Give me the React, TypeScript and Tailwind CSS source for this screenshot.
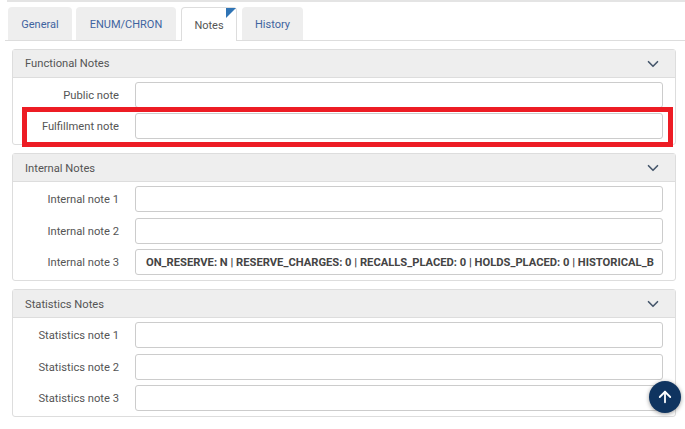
import React from 'react';
import { ChevronDown, ArrowUp } from 'lucide-react';

const tabs = [
  { name: 'General', width: 'w-[64px]' },
  { name: 'ENUM/CHRON', width: 'w-[100px]' },
  { name: 'Notes', width: 'w-[56px]' },
  { name: 'History', width: 'w-[61px]' },
];

const NoteRow = ({ label, value }: { label: string; value?: string }) => (
  <div className="flex items-center h-[26px]">
    <label className="w-[106px] pt-[3px] text-right text-[11.2px] text-[#555]">{label}</label>
    <div className="ml-[16px] w-[528px] h-[26px] bg-white border border-[#ccc] rounded-[3px] px-[10px] pt-[2px] flex items-center whitespace-nowrap text-[11.2px] font-bold text-[#444]">
      {value}
    </div>
  </div>
);

const Panel = ({ title, tight, children }: { title: string; tight?: boolean; children: React.ReactNode }) => (
  <section className="border border-[#ddd] rounded-[3px] bg-white">
    <header className="h-[28px] bg-[#eee] border-b border-[#ddd] flex items-center justify-between pl-[12px] pr-[13px]">
      <span className={tight ? 'pt-[2px] text-[11.2px] text-[#555]' : 'pt-[4px] text-[11.2px] text-[#555]'}>{title}</span>
      <ChevronDown className="w-[18px] h-[18px] text-[#45566b]" strokeWidth={2.2} />
    </header>
    <div className={tight ? 'pt-[4px] pb-[5px] flex flex-col gap-[5px]' : 'pt-[4px] pb-[5px] flex flex-col gap-[5.5px]'}>{children}</div>
  </section>
);

export default function App() {
  return (
    <div className="relative w-[685px] h-[429px] overflow-hidden bg-white font-['Roboto',sans-serif]">
      <div className="ml-[7px] h-[2px] bg-[#e4e4e4]" />

      {/* tabs */}
      <div className="ml-[5px] mt-[5px] h-[34px] flex items-end gap-[4px] pl-[3px] border-b border-[#ddd]">
        {tabs.map((t) =>
          t.name === 'Notes' ? (
            <div key={t.name} className={`relative h-[34px] -mb-px ml-[1px] mr-[1px] pt-[3px] flex items-center justify-center bg-white border border-b-0 border-[#ddd] rounded-t-[4px] text-[11px] text-[#555] ${t.width}`}>
              {t.name}
              <span className="absolute top-0 right-0 w-0 h-0 border-t-[10px] border-l-[10px] border-t-[#2f74b5] border-l-transparent -scale-x-100" />
            </div>
          ) : (
            <div key={t.name} className={`h-[33px] pt-[3px] flex items-center justify-center bg-[#eee] rounded-t-[4px] text-[11px] text-[#3f64a0] ${t.width}`}>
              {t.name}
            </div>
          ),
        )}
      </div>

      <div className="ml-[12px] mt-[8px] w-[664px] flex flex-col gap-[8px]">
        <Panel title="Functional Notes" tight>
          <NoteRow label="Public note" />
          <NoteRow label="Fulfillment note" />
        </Panel>
        <Panel title="Internal Notes">
          <NoteRow label="Internal note 1" />
          <NoteRow label="Internal note 2" />
          <NoteRow label="Internal note 3" value="ON_RESERVE: N | RESERVE_CHARGES: 0 | RECALLS_PLACED: 0 | HOLDS_PLACED: 0 | HISTORICAL_B" />
        </Panel>
        <Panel title="Statistics Notes">
          <NoteRow label="Statistics note 1" />
          <NoteRow label="Statistics note 2" />
          <NoteRow label="Statistics note 3" />
        </Panel>
      </div>

      {/* highlight around the fulfillment row */}
      <div className="absolute left-[22px] top-[107px] w-[651px] h-[40px] border-[5px] border-[#ed1c24]" />

      <button className="absolute left-[649px] top-[381px] w-[32px] h-[32px] rounded-full bg-[#0f3460] shadow-[0_1px_4px_rgba(0,0,0,0.4)] flex items-center justify-center">
        <ArrowUp className="w-[18px] h-[18px] text-white" strokeWidth={2.4} />
      </button>
    </div>
  );
}
